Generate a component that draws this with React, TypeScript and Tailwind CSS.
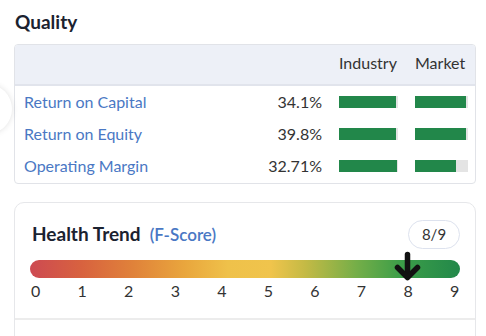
import React from "react";

const ROWS = [
  { label: "Return on Capital", value: "34.1%", industry: 96, market: 96 },
  { label: "Return on Equity", value: "39.8%", industry: 96, market: 96 },
  { label: "Operating Margin", value: "32.71%", industry: 98, market: 77 },
];

function Bar({ pct, width }: { pct: number; width: string }) {
  return (
    <div className={`h-[12px] bg-[#e4e4e4] ${width}`}>
      <div className="h-full bg-[#22874a]" style={{ width: `${pct}%` }} />
    </div>
  );
}

export default function App() {
  return (
    <div className="relative w-[486px] h-[336px] overflow-hidden bg-white font-['Lato',sans-serif] text-[#222]">
      {/* cut-off carousel button on the left edge */}
      <div className="absolute left-[-38px] top-[84px] h-[50px] w-[50px] rounded-full bg-white shadow-[0_0_6px_rgba(0,0,0,0.12)]" />

      <div className="ml-[14px] w-[462px] pt-[10px]">
        <h2 className="text-[19px] font-bold leading-[24px] text-[#1b2230] pl-[1px]">
          Quality
        </h2>

        {/* Quality table */}
        <div className="mt-[10px] rounded-[4px] border border-[#e1e3e8] overflow-hidden">
          <div className="flex items-end h-[41px] bg-[#edf0f7] border-b-2 border-[#e1e4ec] pb-[9px] pr-[7px] text-[16px] text-[#333]">
            <div className="flex-1" />
            <div className="w-[59px] ml-[17px]">Industry</div>
            <div className="w-[53px] ml-[17px]">Market</div>
          </div>
          <div className="pb-[1px]">
            {ROWS.map((r) => (
              <div key={r.label} className="flex items-center h-8 pl-[9px] pr-[7px] text-[16px]">
                <div className="flex-1 text-[#4a78c4]">{r.label}</div>
                <div className="text-right text-[#333]">{r.value}</div>
                <div className="ml-[17px]">
                  <Bar pct={r.industry} width="w-[59px]" />
                </div>
                <div className="ml-[17px]">
                  <Bar pct={r.market} width="w-[53px]" />
                </div>
              </div>
            ))}
          </div>
        </div>

        {/* Health Trend */}
        <div className="mt-[18px] rounded-[10px] border border-[#e6e7ea]">
          <div className="px-[15px] pt-[17px] pb-[17px]">
            <div className="flex items-center justify-between h-[29px]">
              <div className="flex items-baseline ml-[2px]">
                <span className="text-[19px] font-bold text-[#1b2230]">Health Trend</span>
                <span className="ml-[9px] text-[17px] font-semibold text-[#4a78c4]">(F-Score)</span>
              </div>
              <div className="flex h-[29px] w-[52px] items-center justify-center rounded-full border border-[#dde2ee] text-[15px] text-[#333]">
                8/9
              </div>
            </div>
            <div className="relative mt-[11px]">
              <div className="h-[18px] rounded-full bg-[linear-gradient(90deg,#cd4a52_0%,#d8623f_12%,#e0823a_24%,#e9a63d_36%,#efc14a_46%,#f0c44c_56%,#c4ba45_64%,#74ae48_76%,#3d9e48_86%,#22884a_100%)]" />
              <svg
                className="absolute left-[364px] top-[-9px]"
                width="27"
                height="30"
                viewBox="0 0 27 30"
                fill="none"
                stroke="#111"
                strokeWidth="5.5"
                strokeLinecap="round"
                strokeLinejoin="round"
              >
                <path d="M13.5 3.5v22" />
                <path d="M3.5 16.5l10 10 10-10" />
              </svg>
              <div className="mt-[3px] flex justify-between px-[1px] text-[16px] leading-[20px] text-[#333]">
                {["0", "1", "2", "3", "4", "5", "6", "7", "8", "9"].map((n) => (
                  <span key={n} className="w-[9px] text-center">{n}</span>
                ))}
              </div>
            </div>
          </div>
          <div className="h-[40px] border-t-2 border-[#ececec]" />
        </div>
      </div>
    </div>
  );
}
